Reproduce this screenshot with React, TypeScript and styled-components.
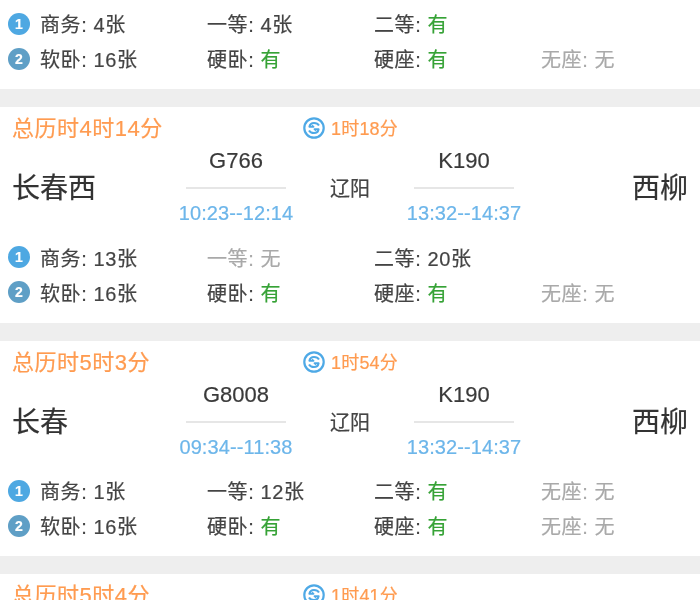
import React from "react";
import styled, { createGlobalStyle } from "styled-components";

const Global = createGlobalStyle`
  html, body { margin: 0; padding: 0; background: #fff; }
  body { height: 600px; overflow: hidden; }
`;

const Page = styled.div`
  width: 700px;
  height: 600px;
  overflow: hidden;
  background: #eeeeee;
  display: flex;
  flex-direction: column;
  gap: 18px;
  font-family: "Liberation Sans", "Noto Sans CJK SC", sans-serif;
  color: #3c3c3c;
  filter: blur(0.65px);
  -webkit-text-stroke: 0.2px currentColor;
`;

const Card = styled.section`
  background: #fff;
  flex: none;
`;

const Header = styled.div`
  height: 42px;
  padding-left: 12px;
  display: flex;
  align-items: center;
  color: #ff9b50;
`;

const Total = styled.span`
  width: 291px;
  flex: none;
  font-size: 22px;
  letter-spacing: 0.5px;
  line-height: 26px;
  margin-top: 2px;
`;

const Transfer = styled.span`
  display: flex;
  align-items: center;
  gap: 6px;
  font-size: 18px;
`;

const TransferText = styled.span`
  margin-bottom: 2px;
  letter-spacing: 0.2px;
`;

const Route = styled.div`
  display: grid;
  grid-template-columns: 1fr 114px 114px 114px 1fr;
  padding: 0 12px;
  align-items: center;
`;

const Station = styled.div<{ $end?: boolean }>`
  font-size: 28px;
  line-height: 40px;
  margin-top: 4px;
  color: #333;
  text-align: ${(p) => (p.$end ? "right" : "left")};
`;

const Leg = styled.div`
  display: flex;
  flex-direction: column;
  align-items: center;
`;

const TrainNo = styled.div`
  font-size: 22px;
  line-height: 24px;
  color: #3a3a3a;
`;

const Rule = styled.div`
  width: 100px;
  height: 2px;
  background: #e6e6e6;
  margin: 14px 0 12px;
`;

const Times = styled.div`
  font-size: 20px;
  line-height: 24px;
  letter-spacing: 0.1px;
  color: #6db6ea;
  white-space: nowrap;
`;

const Via = styled.div`
  font-size: 20px;
  line-height: 24px;
  text-align: center;
  color: #444;
  margin-top: 4px;
`;

const Seats = styled.div<{ $top: number }>`
  padding: ${(p) => p.$top}px 0 13px 8px;
`;

const SeatRow = styled.div`
  height: 35px;
  display: flex;
  align-items: center;
`;

const Badge = styled.span<{ $color: string }>`
  width: 22px;
  height: 22px;
  margin-right: 10px;
  flex: none;
  border-radius: 50%;
  background: ${(p) => p.$color};
  color: #fff;
  font-size: 14px;
  font-weight: 700;
  display: flex;
  align-items: center;
  justify-content: center;
`;

const Seat = styled.span<{ $off?: boolean }>`
  width: 167px;
  flex: none;
  font-size: 20px;
  letter-spacing: 0.6px;
  white-space: nowrap;
  color: ${(p) => (p.$off ? "#a9a9a9" : "#444")};
`;

const Yes = styled.span`
  color: #36a236;
`;

const TransferIcon = () => (
  <svg width="22" height="22" viewBox="0 0 22 22" fill="none">
    <circle cx="11" cy="11" r="9.7" stroke="#4ea9e6" strokeWidth="2.2" />
    <path
      d="M16 8.6C15 6.8 13.2 6 11 6 8.6 6 6.8 7.6 6.4 9.8H10.4L8.8 8.6M6 13.4C7 15.2 8.8 16 11 16 13.4 16 15.2 14.4 15.6 12.2H11.6L13.2 13.4"
      stroke="#4ea9e6"
      strokeWidth="2"
      strokeLinejoin="round"
    />
  </svg>
);

type SeatInfo = [string, string];

const SeatCell = ({ seat }: { seat: SeatInfo }) => {
  const [name, value] = seat;
  if (value === "有") {
    return (
      <Seat>
        {name}: <Yes>有</Yes>
      </Seat>
    );
  }
  return (
    <Seat $off={value === "无"}>
      {name}: {value}
    </Seat>
  );
};

const SeatGrid = ({ top, first, second }: { top: number; first: SeatInfo[]; second: SeatInfo[] }) => (
  <Seats $top={top}>
    <SeatRow>
      <Badge $color="#4ea8e2">1</Badge>
      {first.map((s) => (
        <SeatCell key={s[0]} seat={s} />
      ))}
    </SeatRow>
    <SeatRow>
      <Badge $color="#5f9fc6">2</Badge>
      {second.map((s) => (
        <SeatCell key={s[0]} seat={s} />
      ))}
    </SeatRow>
  </Seats>
);

const secondRow: SeatInfo[] = [
  ["软卧", "16张"],
  ["硬卧", "有"],
  ["硬座", "有"],
  ["无座", "无"],
];

const HeaderRow = ({ total, wait }: { total: string; wait: string }) => (
  <Header>
    <Total>{total}</Total>
    <Transfer>
      <TransferIcon />
      <TransferText>{wait}</TransferText>
    </Transfer>
  </Header>
);

const RouteRow = (p: { from: string; no: string; time: string; time2: string }) => (
  <Route>
    <Station>{p.from}</Station>
    <Leg>
      <TrainNo>{p.no}</TrainNo>
      <Rule />
      <Times>{p.time}</Times>
    </Leg>
    <Via>辽阳</Via>
    <Leg>
      <TrainNo>K190</TrainNo>
      <Rule />
      <Times>{p.time2}</Times>
    </Leg>
    <Station $end>西柳</Station>
  </Route>
);

export default function App() {
  return (
    <Page>
      <Global />
      <Card>
        <SeatGrid
          top={6}
          first={[
            ["商务", "4张"],
            ["一等", "4张"],
            ["二等", "有"],
          ]}
          second={secondRow}
        />
      </Card>
      <Card>
        <HeaderRow total="总历时4时14分" wait="1时18分" />
        <RouteRow from="长春西" no="G766" time="10:23--12:14" time2="13:32--14:37" />
        <SeatGrid
          top={14.5}
          first={[
            ["商务", "13张"],
            ["一等", "无"],
            ["二等", "20张"],
          ]}
          second={secondRow}
        />
      </Card>
      <Card>
        <HeaderRow total="总历时5时3分" wait="1时54分" />
        <RouteRow from="长春" no="G8008" time="09:34--11:38" time2="13:32--14:37" />
        <SeatGrid
          top={14.5}
          first={[
            ["商务", "1张"],
            ["一等", "12张"],
            ["二等", "有"],
            ["无座", "无"],
          ]}
          second={secondRow}
        />
      </Card>
      <Card>
        <HeaderRow total="总历时5时4分" wait="1时41分" />
      </Card>
    </Page>
  );
}
